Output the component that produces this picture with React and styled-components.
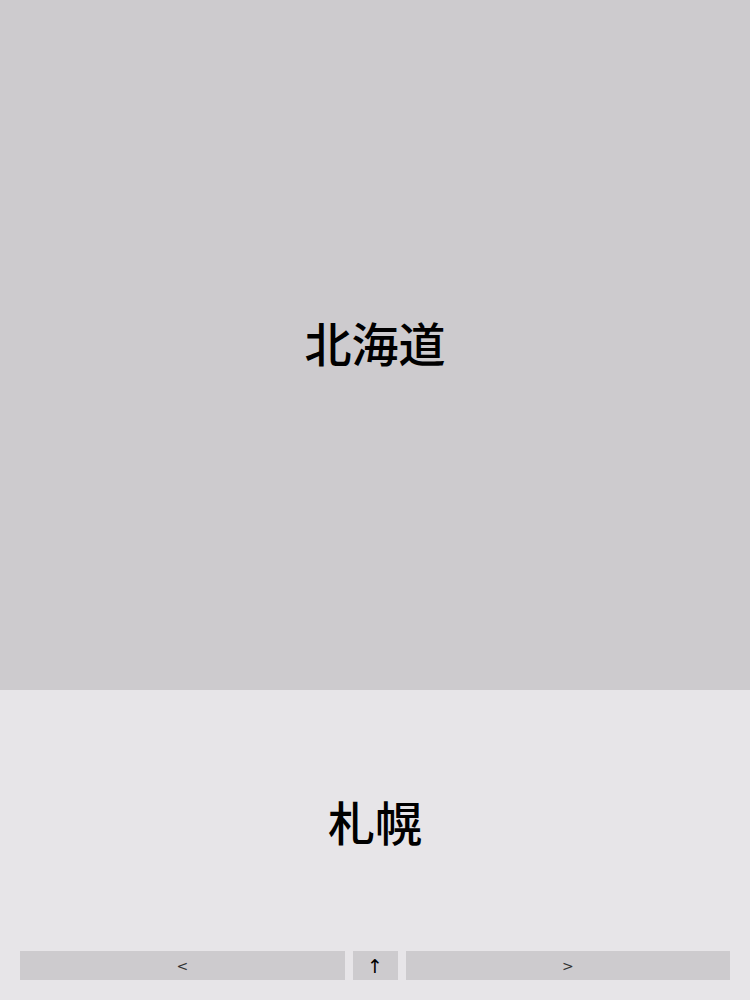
import React from 'react';
import styled, { createGlobalStyle } from 'styled-components';

const GlobalStyle = createGlobalStyle`
  html, body {
    margin: 0;
    padding: 0;
    height: 100%;
  }
  body {
    font-family: "Noto Sans CJK JP", "Liberation Sans", sans-serif;
    background-color: #e7e5e8;
  }
  #root {
    height: 100%;
  }
`;

const Page = styled.div`
  display: flex;
  flex-direction: column;
  height: 1000px;
  width: 750px;
`;

const Prefecture = styled.section`
  align-items: center;
  background-color: #cdcbce;
  display: flex;
  flex: 0 0 690px;
  justify-content: center;
  padding-bottom: 8px;
  box-sizing: border-box;
`;

const City = styled.section`
  background-color: #e7e5e8;
  display: flex;
  flex: 1;
  flex-direction: column;
`;

const CityName = styled.div`
  align-items: center;
  display: flex;
  flex: 1;
  justify-content: center;
`;

const Title = styled.h1`
  color: #000;
  font-size: 47px;
  font-weight: 500;
  letter-spacing: 0;
  line-height: 1;
  margin: 0;
`;

const Controls = styled.nav`
  display: grid;
  gap: 8px;
  grid-template-columns: 1fr 45px 1fr;
  padding: 0 20px 20px;
`;

const NavButton = styled.button`
  align-items: center;
  background-color: #cdcbce;
  border: none;
  color: ${props => (props.dark ? '#000' : '#333')};
  display: flex;
  font-family: "DejaVu Sans", "Liberation Sans", sans-serif;
  font-size: ${props => (props.dark ? '19px' : '14px')};
  height: 29px;
  justify-content: center;
  padding: 0;
`;

export default function App() {
  return (
    <Page>
      <GlobalStyle />
      <Prefecture>
        <Title>北海道</Title>
      </Prefecture>
      <City>
        <CityName>
          <Title>札幌</Title>
        </CityName>
        <Controls>
          <NavButton>&lt;</NavButton>
          <NavButton dark>↑</NavButton>
          <NavButton>&gt;</NavButton>
        </Controls>
      </City>
    </Page>
  );
}
